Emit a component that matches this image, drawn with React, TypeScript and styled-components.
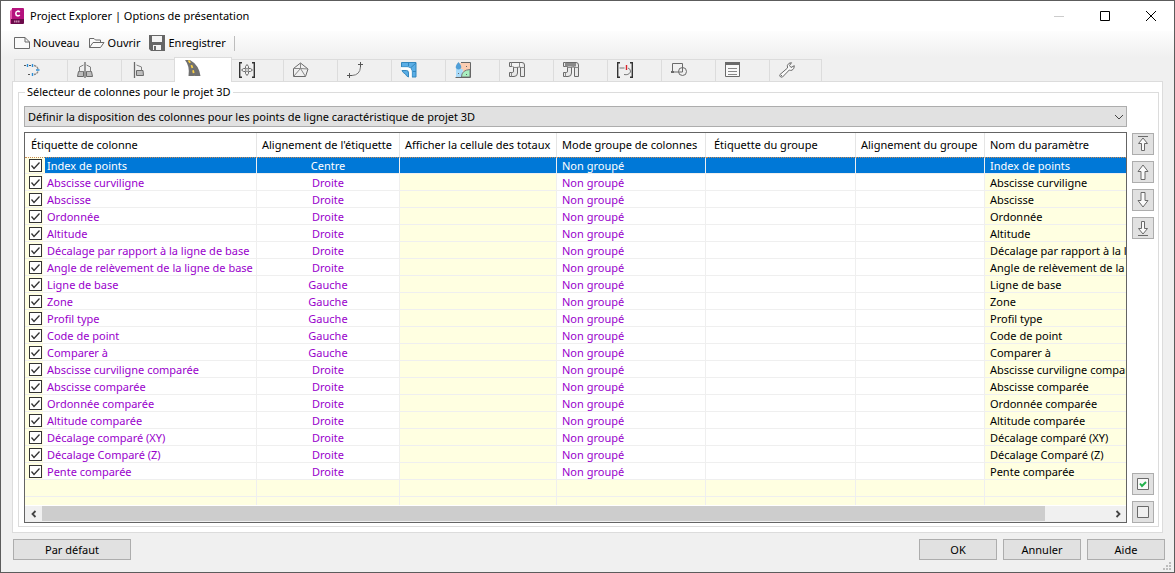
import React, { useState } from "react";
import styled, { createGlobalStyle, css } from "styled-components";

const line = "#dcdcdc";
const grid = "#efefef";
const pale = "#ffffe1";
const violet = "#9900cc";

const GlobalStyle = createGlobalStyle`
  *, *::before, *::after { box-sizing: border-box; }
  body {
    margin: 0;
    font: 11px/16px "Noto Sans", "Open Sans", sans-serif;
    color: #000;
  }
  button, select, input { font: inherit; color: inherit; margin: 0; }
  svg { display: block; flex: none; }
`;

const Window = styled.div`
  display: flex;
  flex-direction: column;
  height: 100vh;
  min-height: 420px;
  border: 1px solid #5c5c5c;
  background: #f0f0f0;
  position: relative;
`;

const TitleBar = styled.header`
  display: flex;
  align-items: center;
  height: 30px;
  padding-left: 8px;
  background: #fff;
`;

const Title = styled.h1`
  flex: 1;
  margin: 0 0 0 5px;
  font-size: 11px;
  line-height: 16px;
  font-weight: 400;
`;

const CaptionButton = styled.button`
  display: grid;
  place-items: center;
  width: 46px;
  height: 28px;
  padding: 0;
  border: 0;
  background: transparent;
`;

const Toolbar = styled.div`
  display: flex;
  align-items: center;
  height: 26px;
  padding: 0 12px 2px;
  background: linear-gradient(#fdfdfd, #f0f0f0);
`;

const ToolButton = styled.button`
  display: flex;
  align-items: center;
  gap: 3px;
  height: 22px;
  margin-right: 7px;
  padding: 0 1px;
  border: 0;
  background: transparent;
`;

const Separator = styled.span`
  width: 1px;
  height: 15px;
  background: #bdbdbd;
`;

const Tabs = styled.div`
  display: flex;
  align-items: flex-end;
  height: 24px;
  padding-left: 13px;
`;

const Tab = styled.button<{ $active: boolean }>`
  display: flex;
  width: 54px;
  height: 22px;
  padding: 2px 0 0 9px;
  border: 1px solid ${line};
  border-width: 1px 0 0 1px;
  background: #f0f0f0;
  &:first-child, &:last-child { width: 53px; }
  &:last-child { border-right-width: 1px; }
  ${(p) =>
    p.$active &&
    css`
      position: relative;
      width: 58px;
      height: 25px;
      margin: 0 -3px -1px -1px;
      padding-left: 10px;
      border-right-width: 1px;
      background: #fff;
    `}
`;

const Panel = styled.main`
  display: flex;
  flex: 1;
  flex-direction: column;
  min-height: 0;
  margin: 0 11px;
  padding: 2px 3px 5px 5px;
  border: 1px solid ${line};
  background: #fff;
`;

const Group = styled.section`
  display: flex;
  flex: 1;
  flex-direction: column;
  min-height: 0;
`;

const GroupTitle = styled.h2`
  display: flex;
  align-items: center;
  gap: 2px;
  margin: 0;
  font-size: 11px;
  line-height: 16px;
  font-weight: 400;
  &::before, &::after {
    content: "";
    height: 8px;
    margin-top: 8px;
    border-top: 1px solid ${line};
  }
  &::before { width: 7px; border-left: 1px solid ${line}; }
  &::after { flex: 1; border-right: 1px solid ${line}; }
`;

const GroupBody = styled.div`
  display: grid;
  grid-template-columns: 1fr 22px;
  grid-template-rows: 21px 1fr;
  gap: 5px;
  flex: 1;
  min-height: 0;
  padding: 6px 4px 3px 5px;
  border: 1px solid ${line};
  border-top: 0;
`;

const SelectBox = styled.div`
  display: grid;
  align-items: center;
  & > * { grid-area: 1 / 1; }
  svg { justify-self: end; margin-right: 3px; pointer-events: none; }
`;

const Select = styled.select`
  appearance: none;
  width: 100%;
  height: 21px;
  padding: 0 20px 0 3px;
  border: 1px solid #adadad;
  border-radius: 0;
  background: #e1e1e1;
`;

const ListBox = styled.div`
  grid-column: 1;
  grid-row: 2;
  display: flex;
  flex-direction: column;
  min-height: 0;
  border: 1px solid #646464;
  background: #fff;
`;

const ListView = styled.div`
  flex: 1;
  min-height: 0;
  overflow: hidden;
`;

const Table = styled.table`
  width: 100%;
  table-layout: fixed;
  border-collapse: separate;
  border-spacing: 0;
`;

const Col = styled.col<{ $w?: number }>`
  width: ${(p) => (p.$w ? `${p.$w}px` : "auto")};
`;

const HeadCell = styled.th<{ $pad?: number }>`
  height: 24px;
  padding: 0 0 0 ${(p) => p.$pad ?? 5}px;
  border-right: 1px solid #e5e5e5;
  font-weight: 400;
  text-align: left;
  white-space: nowrap;
  &:last-child { border-right: 0; }
`;

const Row = styled.tr<{ $selected?: boolean }>`
  ${(p) =>
    p.$selected &&
    css`
      && td { background: #0078d7; color: #fff; border-top: 1px dotted #c98a55; }
      && td:first-child { background: linear-gradient(90deg, ${pale} 20px, #0078d7 20px); }
    `}
`;

const Cell = styled.td<{ $pale?: boolean; $center?: boolean; $dark?: boolean; $check?: boolean }>`
  height: 17px;
  padding: 0 0 0 ${(p) => (p.$check || p.$center ? 0 : 5)}px;
  border-right: 1px solid ${grid};
  border-bottom: 1px solid ${grid};
  line-height: 15px;
  white-space: nowrap;
  overflow: hidden;
  text-align: ${(p) => (p.$center ? "center" : "left")};
  color: ${(p) => (p.$dark ? "#000" : violet)};
  background: ${(p) =>
    p.$pale ? pale : p.$check ? `linear-gradient(90deg, ${pale} 18px, #fff 18px)` : "#fff"};
  &:last-child { border-right: 0; }
`;

const CheckLabel = styled.label`
  display: grid;
  grid-template-columns: 13px 1fr;
  align-items: center;
  column-gap: 5px;
  height: 15px;
  padding-left: 4px;
  svg { grid-area: 1 / 1; pointer-events: none; }
`;

const Check = styled.input`
  appearance: none;
  grid-area: 1 / 1;
  width: 13px;
  height: 13px;
  border: 1px solid #333;
  background: #fff;
  &:not(:checked) + svg { visibility: hidden; }
`;

const ScrollBar = styled.div`
  display: flex;
  height: 17px;
  padding-bottom: 1px;
  background: #f0f0f0;
  border-top: 1px solid #fff;
`;

const ScrollButton = styled.button`
  display: grid;
  place-items: center;
  width: 17px;
  padding: 0;
  border: 0;
  background: transparent;
`;

const ScrollTrack = styled.div`
  flex: 1;
`;

const ScrollThumb = styled.div`
  width: 94%;
  height: 100%;
  background: #cdcdcd;
`;

const SideButtons = styled.div`
  grid-column: 2;
  grid-row: 2;
  display: flex;
  flex-direction: column;
  gap: 6px;
  padding-top: 1px;
`;

const SideButton = styled.button<{ $push?: boolean }>`
  display: grid;
  place-items: center;
  width: 22px;
  height: 22px;
  margin-top: ${(p) => (p.$push ? "auto" : 0)};
  padding: 0;
  border: 1px solid #adadad;
  background: #e1e1e1;
`;

const Footer = styled.footer`
  display: flex;
  gap: 6px;
  padding: 6px 9px 12px 12px;
`;

const FooterButton = styled.button<{ $wide?: boolean }>`
  width: ${(p) => (p.$wide ? 118 : 78)}px;
  height: 21px;
  margin-right: ${(p) => (p.$wide ? "auto" : 0)};
  padding: 0;
  border: 1px solid #adadad;
  background: #e1e1e1;
  line-height: 16px;
`;

const Grip = styled.svg`
  position: absolute;
  right: 2px;
  bottom: 1px;
`;

const Icon = ({ children, w = 16, h = 16 }: { children: React.ReactNode; w?: number; h?: number }) => (
  <svg width={w} height={h} viewBox={`0 0 ${w} ${h}`} fill="none" stroke="#6a6a6a" aria-hidden="true">
    {children}
  </svg>
);

const PipeShape = ({ fill }: { fill: string }) => (
  <Icon>
    <path d="M.5 .5H13Q15.500 .5 15.500 3V14.500H11.500V5H8.500V11Q8.500 14.500 5 14.500H.5V10.500H3.500Q4.500 10.500 4.500 9V4.500H.5Z" fill="#e9e9e9" />
    <path d="M3 1H13V4.500H3Z" fill={fill} stroke="none" />
    <path d="M2.500 .5V4.500M10.500 1V5M4.500 5.500H8.500M11.500 5.500H15.500M2.500 10.500V14.500" stroke="#8a8a8a" />
  </Icon>
);

const tabs: { name: string; icon: React.ReactNode }[] = [
  {
    name: "Axes",
    icon: (
      <Icon>
        <path d="M0 3.500H2M5 3.500H7M4 12.500H6" stroke="#555" />
        <path d="M10 3.500Q13 4 14 7M14 9.500Q13 12 10 12.500" stroke="#888" strokeWidth="1.300" strokeDasharray="2.500 .7" />
        <path d="M3.500 2V5M8.500 2V5M8.500 11V14M12 8H15.500" stroke="#2c8ed6" strokeWidth="1.400" />
      </Icon>
    ),
  },
  {
    name: "Profils en travers",
    icon: (
      <Icon>
        <path d="M1.500 9.500H6.500V14.500H.5ZM14.500 9.500H9.500V14.500H15.500Z" fill="#bdbdbd" />
        <path d="M6.500 3L2.500 5V9.500H6.500M9.500 3L13.500 5V9.500H9.500" stroke="#808080" />
        <path d="M8 0V16" strokeWidth="1.300" />
      </Icon>
    ),
  },
  {
    name: "Profils",
    icon: (
      <Icon>
        <path d="M5.500 8.500H12L12.500 13.500H5.500Z" fill="#bdbdbd" />
        <path d="M5.500 3L10.500 5V8.500" stroke="#808080" />
        <path d="M3.500 0V16" strokeWidth="1.300" />
      </Icon>
    ),
  },
  {
    name: "Projet 3D",
    icon: (
      <Icon>
        <path d="M0 0H5Q14 5 15.500 16H3.500Q5 6 0 0Z" fill="#707070" stroke="none" />
        <path d="M3.500 .5Q8 6 9 16" stroke="#fbd044" strokeWidth="1.800" strokeDasharray="3 2.500" />
      </Icon>
    ),
  },
  {
    name: "Assemblages",
    icon: (
      <Icon>
        <path d="M3 .7H.7V15.300H3M13 .7H15.300V15.300H13" stroke="#333" strokeWidth="1.400" />
        <path d="M8 2.500L9.500 4.500V6.500H11.500L13.500 8L11.500 9.500H9.500V11.500L8 13.500L6.500 11.500V9.500H4.500L2.500 8L4.500 6.500H6.500V4.500Z" />
        <circle cx="8" cy="8" r="1.500" fill="#f0f0f0" stroke="#888" />
      </Icon>
    ),
  },
  {
    name: "Surfaces",
    icon: (
      <Icon>
        <path d="M7.500 1L15 7L12.500 14.500H.5V6.500Z" />
        <path d="M7.500 1V6.500L.5 6.500M7.500 6.500L15 7M7.500 6.500L.5 14.500M7.500 6.500L12.500 14.500" stroke="#888" />
      </Icon>
    ),
  },
  {
    name: "Géométrie",
    icon: (
      <Icon>
        <path d="M13.500 0V5M11 2.500H16M2.500 11V16M0 13.500H5" stroke="#555" />
        <path d="M13.500 5Q13 13 5 13.500" stroke="#777" />
      </Icon>
    ),
  },
  {
    name: "Talus",
    icon: (
      <Icon>
        <path d="M.5 .5H15V15H11V9Q11 5 7 5H.5Z" fill="#5aaee6" stroke="#3487bd" />
        <path d="M0 6.500H6Q9.500 6.500 9.500 10V15.500" stroke="#fff" strokeWidth="2.500" />
        <path d="M1 8.500H5.500Q7.500 8.500 7.500 11V15Q5 14 4.500 12Q2 11 1 8.500Z" fill="#5aaee6" stroke="#3487bd" />
        <path d="M10 5.500L15 1M7.500 1V4M12 9.500H15" stroke="#3487bd" />
      </Icon>
    ),
  },
  {
    name: "Bassins versants",
    icon: (
      <Icon>
        <path d="M2 1H15V10Q9 10 7 8H2Z" fill="#fbcdb2" stroke="none" />
        <path d="M1 7H8L7 15H1Z" fill="#a9dbfa" stroke="none" />
        <path d="M15 7.500Q6.500 8 6.500 15H15Z" fill="#a8efc0" stroke="#777" />
        <path d="M6 .5H15.500V15.500H.5" stroke="#666" />
        <path d="M3.500 0Q7.500 4.500 5.800 6.500Q3.500 8.500 1.200 6.500Q-.5 4.500 3.500 0Z" fill="#4f9fd8" stroke="none" />
        <path d="M11 4.500h1M3 11.500h1M11 12.500h1" stroke="#666" />
      </Icon>
    ),
  },
  { name: "Réseaux de canalisations", icon: <PipeShape fill="#f4f4f4" /> },
  { name: "Réseaux sous pression", icon: <PipeShape fill="#8a8a8a" /> },
  {
    name: "Raccordements",
    icon: (
      <Icon>
        <path d="M3 .7H.7V15.300H3M13 .7H15.300V15.300H13" stroke="#333" strokeWidth="1.400" />
        <path d="M2.500 6H7.500M11 6Q14 7 13.500 10Q11.500 13.500 7 12.500" stroke="#777" />
        <path d="M9.500 3V8" stroke="#d8232a" strokeWidth="1.400" />
      </Icon>
    ),
  },
  {
    name: "Formes",
    icon: (
      <Icon>
        <path d="M1.500 10V1.500H11.500V10H1.500" />
        <circle cx="11.500" cy="9.500" r="4" />
        <path d="M0 10H3" strokeWidth="2" />
      </Icon>
    ),
  },
  {
    name: "Tableaux",
    icon: (
      <Icon>
        <path d="M.5 .5H14.500V14.500H.5Z" fill="#fafafa" />
        <path d="M0 1.500H15" strokeWidth="3" />
        <path d="M3 6.500H12M3 9.500H12M3 12.500H12" stroke="#888" />
      </Icon>
    ),
  },
  {
    name: "Paramètres",
    icon: (
      <Icon>
        <path
          d="M1 12.500L8.500 6Q7.500 3 10 1.300L12.500 .7L10.500 3.500L12 5.500L15.300 3.700Q15.500 7 13 8.200Q11.500 8.700 10.300 8L3.500 15Q1.500 15.700 .8 14Q.6 13 1 12.500Z"
          fill="#fafafa"
        />
        <path d="M2 13.500h1" />
      </Icon>
    ),
  },
];

const labels: [string, string][] = [
  ["Index de points", "Centre"],
  ["Abscisse curviligne", "Droite"],
  ["Abscisse", "Droite"],
  ["Ordonnée", "Droite"],
  ["Altitude", "Droite"],
  ["Décalage par rapport à la ligne de base", "Droite"],
  ["Angle de relèvement de la ligne de base", "Droite"],
  ["Ligne de base", "Gauche"],
  ["Zone", "Gauche"],
  ["Profil type", "Gauche"],
  ["Code de point", "Gauche"],
  ["Comparer à", "Gauche"],
  ["Abscisse curviligne comparée", "Droite"],
  ["Abscisse comparée", "Droite"],
  ["Ordonnée comparée", "Droite"],
  ["Altitude comparée", "Droite"],
  ["Décalage comparé (XY)", "Droite"],
  ["Décalage Comparé (Z)", "Droite"],
  ["Pente comparée", "Droite"],
];

const ArrowUp = ({ bar }: { bar?: boolean }) => (
  <Icon>
    {bar && <path d="M3 .5H13" />}
    <path d={bar ? "M8 2L12.500 7.500H9.500V14.500H6.500V7.500H3.500Z" : "M8 1L13 7.500H10V15.500H6V7.500H3Z"} fill="#fafafa" />
  </Icon>
);

const ArrowDown = ({ bar }: { bar?: boolean }) => (
  <Icon>
    <path d={bar ? "M8 14L12.500 8.500H9.500V1.500H6.500V8.500H3.500Z" : "M8 15L13 8.500H10V.5H6V8.500H3Z"} fill="#fafafa" />
    {bar && <path d="M3 15.500H13" />}
  </Icon>
);

export default function App() {
  const [tab, setTab] = useState(3);
  const [selected, setSelected] = useState(0);
  return (
    <>
      <GlobalStyle />
      <Window>
        <TitleBar>
          <svg width="16" height="17" viewBox="0 0 16 17" aria-hidden="true">
            <path d="M1 3L3 1V15L1 16Z" fill="#e05aa8" />
            <path d="M3 0H14a1 1 0 0 1 1 1V11H3Z" fill="#b5127d" />
            <path d="M2 11H15V15a1 1 0 0 1-1 1H2Z" fill="#6b0a4a" />
            <path d="M10.800 4Q9.800 3 8.500 3.200Q6.800 3.500 6.800 5.500T8.500 7.800Q9.800 8 10.800 7" fill="none" stroke="#fff" strokeWidth="1.600" />
            <path d="M5 13.500H11" stroke="#c685ae" strokeWidth="2" strokeDasharray="1.500 .5" />
          </svg>
          <Title>Project Explorer | Options de présentation</Title>
          <CaptionButton aria-label="Réduire">
            <Icon w={10} h={10}><path d="M0 5.500H10" stroke="#ccc" /></Icon>
          </CaptionButton>
          <CaptionButton aria-label="Agrandir">
            <Icon w={10} h={10}><path d="M.5 .5H9.500V9.500H.5Z" stroke="#000" /></Icon>
          </CaptionButton>
          <CaptionButton aria-label="Fermer">
            <Icon w={10} h={10}><path d="M0 0L10 10M10 0L0 10" stroke="#000" /></Icon>
          </CaptionButton>
        </TitleBar>
        <Toolbar>
          <ToolButton>
            <Icon><path d="M.5 2.500H11L15.500 7V13.500H.5ZM11 2.500V7H15.500" fill="#fafafa" /></Icon>
            Nouveau
          </ToolButton>
          <ToolButton>
            <Icon><path d="M.5 12.500V3.500H5L6.500 5H11.500V7.500M.5 12.500L4 7.500H15L11.500 12.500Z" fill="#fafafa" /></Icon>
            Ouvrir
          </ToolButton>
          <ToolButton>
            <Icon>
              <path d="M0 0H16V16H2L0 14Z" fill="#666" stroke="none" />
              <path d="M3 1H13V7H3ZM4 10H12V15H4Z" fill="#f4f4f4" stroke="none" />
              <path d="M6 11V15" strokeWidth="2" />
            </Icon>
            Enregistrer
          </ToolButton>
          <Separator />
        </Toolbar>
        <Tabs role="tablist">
          {tabs.map((t, i) => (
            <Tab key={t.name} role="tab" aria-label={t.name} aria-selected={i === tab} $active={i === tab} onClick={() => setTab(i)}>
              {t.icon}
            </Tab>
          ))}
        </Tabs>
        <Panel>
          <Group>
            <GroupTitle>Sélecteur de colonnes pour le projet 3D</GroupTitle>
            <GroupBody>
              <SelectBox>
                <Select aria-label="Sélecteur de colonnes">
                  <option>Définir la disposition des colonnes pour les points de ligne caractéristique de projet 3D</option>
                </Select>
                <Icon w={10} h={10}><path d="M1 3L5 7L9 3" stroke="#444" /></Icon>
              </SelectBox>
              <ListBox>
                <ListView>
                  <Table>
                    <colgroup>
                      <Col $w={232} />
                      <Col $w={143} />
                      <Col $w={157} />
                      <Col $w={149} />
                      <Col $w={150} />
                      <Col $w={129} />
                      <Col />
                    </colgroup>
                    <thead>
                      <tr>
                        <HeadCell $pad={6}>Étiquette de colonne</HeadCell>
                        <HeadCell>Alignement de l'étiquette</HeadCell>
                        <HeadCell>Afficher la cellule des totaux</HeadCell>
                        <HeadCell>Mode groupe de colonnes</HeadCell>
                        <HeadCell $pad={8}>Étiquette du groupe</HeadCell>
                        <HeadCell>Alignement du groupe</HeadCell>
                        <HeadCell>Nom du paramètre</HeadCell>
                      </tr>
                    </thead>
                    <tbody>
                      {labels.map(([name, align], i) => (
                        <Row key={name} $selected={i === selected} onClick={() => setSelected(i)}>
                          <Cell $check>
                            <CheckLabel>
                              <Check type="checkbox" defaultChecked />
                              <Icon w={13} h={13}><path d="M2.500 6.500L5 9.500L10.500 3.500" stroke="#333" strokeWidth="1.300" /></Icon>
                              {name}
                            </CheckLabel>
                          </Cell>
                          <Cell $center>{align}</Cell>
                          <Cell $pale />
                          <Cell>Non groupé</Cell>
                          <Cell />
                          <Cell />
                          <Cell $pale $dark>{name}</Cell>
                        </Row>
                      ))}
                      {[0, 1].map((r) => (
                        <Row key={r}>
                          {[0, 1, 2, 3, 4, 5, 6].map((c) => (
                            <Cell key={c} $pale />
                          ))}
                        </Row>
                      ))}
                    </tbody>
                  </Table>
                </ListView>
                <ScrollBar>
                  <ScrollButton aria-label="Défiler à gauche">
                    <Icon w={8} h={8}><path d="M5.500 1L2.500 4L5.500 7" stroke="#444" strokeWidth="1.800" /></Icon>
                  </ScrollButton>
                  <ScrollTrack><ScrollThumb /></ScrollTrack>
                  <ScrollButton aria-label="Défiler à droite">
                    <Icon w={8} h={8}><path d="M2.500 1L5.500 4L2.500 7" stroke="#444" strokeWidth="1.800" /></Icon>
                  </ScrollButton>
                </ScrollBar>
              </ListBox>
              <SideButtons>
                <SideButton aria-label="Placer en premier"><ArrowUp bar /></SideButton>
                <SideButton aria-label="Monter"><ArrowUp /></SideButton>
                <SideButton aria-label="Descendre"><ArrowDown /></SideButton>
                <SideButton aria-label="Placer en dernier"><ArrowDown bar /></SideButton>
                <SideButton aria-label="Tout cocher" $push>
                  <Icon w={12} h={12}>
                    <path d="M.5 .5H11.500V11.500H.5Z" fill="#fafafa" />
                    <path d="M3 5.500L5 8L9 4" stroke="#22b14c" strokeWidth="2" />
                  </Icon>
                </SideButton>
                <SideButton aria-label="Tout décocher">
                  <Icon w={12} h={12}><path d="M.5 .5H11.500V11.500H.5Z" fill="#f0f0f0" /></Icon>
                </SideButton>
              </SideButtons>
            </GroupBody>
          </Group>
        </Panel>
        <Footer>
          <FooterButton $wide>Par défaut</FooterButton>
          <FooterButton>OK</FooterButton>
          <FooterButton>Annuler</FooterButton>
          <FooterButton>Aide</FooterButton>
        </Footer>
        <Grip width="9" height="9" viewBox="0 0 9 9" aria-hidden="true">
          <path d="M6 0h2v2h-2zM3 3h2v2h-2zM6 3h2v2h-2zM0 6h2v2h-2zM3 6h2v2h-2zM6 6h2v2h-2z" fill="#bdbdbd" />
        </Grip>
      </Window>
    </>
  );
}
